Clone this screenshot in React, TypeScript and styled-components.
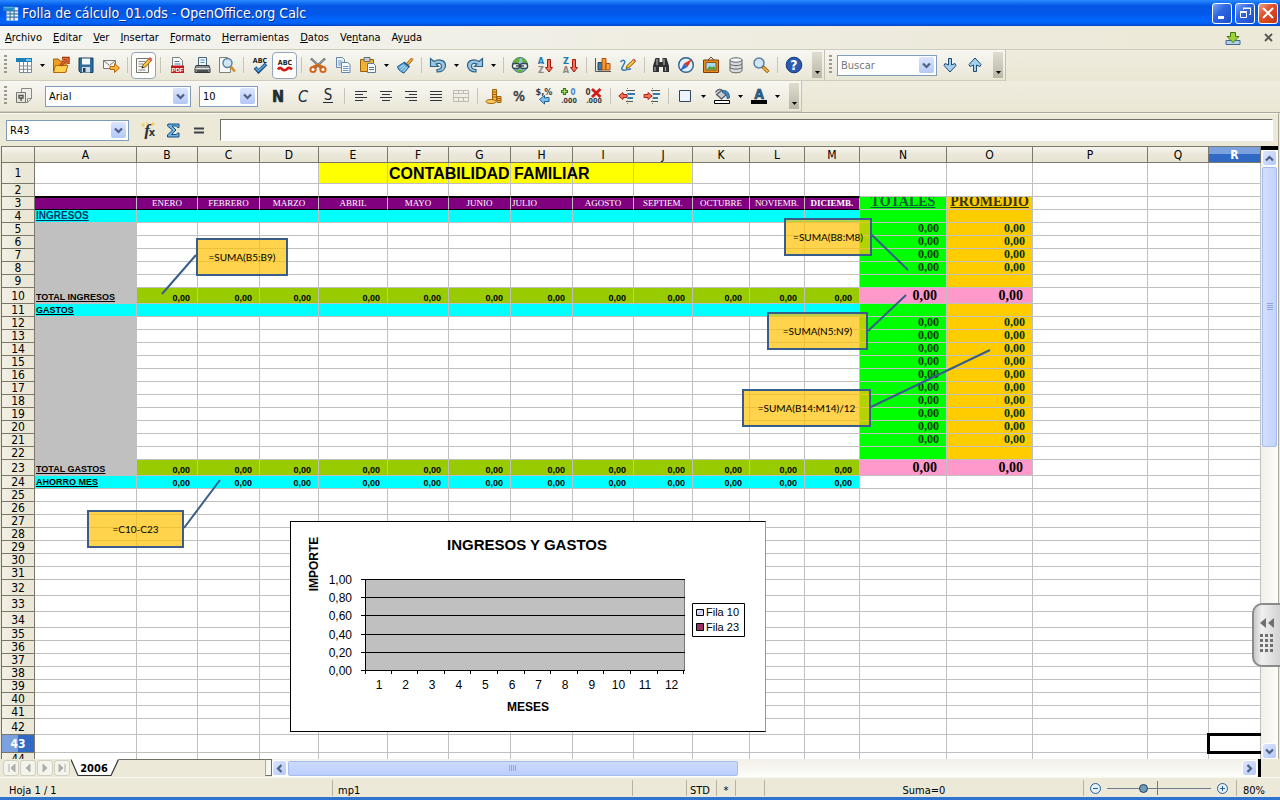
import React from "react";
import styled, { createGlobalStyle, css } from "styled-components";

const UI = `"DejaVu Sans Condensed", "Noto Sans", sans-serif`;
const SANS = `"Liberation Sans", Arial, sans-serif`;
const SERIF = `"Liberation Serif", "Times New Roman", serif`;

const Global = createGlobalStyle`
  * { box-sizing: border-box; }
  body { margin: 0; font-family: ${UI}; font-size: 11px; color: #000; overflow: hidden; }
  button, input, select { font: inherit; color: inherit; margin: 0; padding: 0; border: 0; background: none; outline: 0; }
  button { display: flex; align-items: center; justify-content: center; flex: none; }
  svg { display: block; flex: none; }
`;

const Window = styled.div`
  display: flex;
  flex-direction: column;
  height: 100vh;
  background: #ece9d8;
`;

/* ---------- title bar ---------- */
const TitleBar = styled.header`
  display: flex;
  align-items: center;
  height: 26px;
  flex: none;
  padding: 0 2px 0 3px;
  gap: 3px;
  background: linear-gradient(#2b8bff 0, #1371f4 3px, #0356e4 6px, #0358ea 14px, #0166ff 20px, #0162f6 23px, #0043c8 26px);
`;
const Title = styled.h1`
  flex: 1;
  margin: 0;
  font-size: 14px;
  line-height: 18px;
  font-weight: 400;
  color: #fff;
  text-shadow: 1px 1px 0 #0a2a80;
  white-space: nowrap;
`;
const CaptionButton = styled.button<{ $close?: boolean }>`
  width: 20px;
  height: 21px;
  border: 1px solid #fff;
  border-radius: 3px;
  background: ${(p) =>
    p.$close
      ? "linear-gradient(135deg, #f0a088, #e2502c 40%, #c5340f)"
      : "linear-gradient(135deg, #7fa6f5, #3068e2 40%, #1c4fc9)"};
`;

/* ---------- menu ---------- */
const MenuBar = styled.nav`
  display: flex;
  align-items: center;
  height: 24px;
  flex: none;
  padding: 0 0 0 5px;
  gap: 11px;
  background: linear-gradient(90deg, #f4f4f0, #edeadc 75%, #ece9d8);
  border-bottom: 1px solid #cfccbd;
`;
const MenuLink = styled.a`
  color: #000;
  line-height: 16px;
  text-decoration: none;
  white-space: nowrap;
`;
const Spacer = styled.div`
  flex: 1;
`;
const MenuButton = styled.button`
  width: 24px;
  height: 18px;
`;

/* ---------- toolbars ---------- */
const ToolRow = styled.div<{ $tall?: boolean }>`
  display: flex;
  height: ${(p) => (p.$tall ? 32 : 31)}px;
  flex: none;
  background: linear-gradient(#efecdf, #eae7d4);
  border-bottom: ${(p) => (p.$tall ? "1px solid #aca899" : "0")};
`;
const ToolBar = styled.div`
  display: flex;
  align-items: center;
  padding-right: 2px;
  background: linear-gradient(#f8f7f2, #efede2 60%, #e9e6d5);
  border-right: 1px solid #c4c1b0;
  border-bottom: 1px solid #cfccbd;
`;
const Grip = styled.i`
  width: 3px;
  height: 20px;
  margin: 0 4px;
  flex: none;
  background: repeating-linear-gradient(#9c9a8c 0 2px, transparent 2px 4px);
`;
const ToolButton = styled.button<{ $on?: boolean }>`
  width: 25px;
  height: 27px;
  border-radius: 4px;
  ${(p) =>
    p.$on &&
    css`
      background: #fdfdfc;
      border: 1px solid #93a5bd;
    `}
`;
const ArrowButton = styled.button`
  width: 12px;
  height: 25px;
`;
const Sep = styled.i`
  width: 1px;
  height: 16px;
  margin: 0 3px 0 4px;
  flex: none;
  background: #c6c4b6;
`;
const More = styled.button`
  width: 10px;
  height: 26px;
  margin-left: 6px;
  align-items: flex-end;
  padding-bottom: 4px;
  background: linear-gradient(#dfddd0, #b9b6a6);
`;
const Combo = styled.div<{ $w: number; $ml?: number }>`
  display: flex;
  align-items: center;
  width: ${(p) => p.$w}px;
  height: 21px;
  flex: none;
  margin-left: ${(p) => p.$ml || 0}px;
  padding: 0 2px 0 3px;
  border: 1px solid #7f9db9;
  background: #fff;
`;
const ComboSelect = styled.select`
  flex: 1;
  min-width: 0;
  height: 17px;
  appearance: none;
`;
const ComboInput = styled.input`
  flex: 1;
  min-width: 0;
  height: 17px;
  &::placeholder { color: #777; opacity: 1; }
`;
const Drop = styled.span`
  display: flex;
  align-items: center;
  justify-content: center;
  width: 15px;
  height: 16px;
  flex: none;
  border-radius: 2px;
  background: linear-gradient(#dbe5ff, #b3c8f8);
`;
const Gap = styled.i<{ $w: number }>`
  width: ${(p) => p.$w}px;
  flex: none;
`;

/* ---------- formula bar ---------- */
const FormulaBar = styled.div`
  display: flex;
  align-items: center;
  height: 33px;
  flex: none;
  padding: 0 5px 0 6px;
  margin-right: 1px;
  border-top: 1px solid #f8f7f0;
  border-right: 1px solid #aca899;
`;
const FormulaInput = styled.input`
  flex: 1;
  min-width: 0;
  height: 22px;
  margin-left: 9px;
  padding: 0 4px;
  background: #fff;
  border: 1px solid #fff;
  border-top: 1px solid #716f64;
  border-left: 1px solid #716f64;
`;

/* ---------- sheet ---------- */
const SheetRow = styled.div`
  display: flex;
  flex: 1;
  min-height: 0;
  margin: 0 1px;
  border-left: 1px solid #716f64;
  border-right: 1px solid #aca899;
`;
const Sheet = styled.main`
  position: relative;
  flex: 1;
  min-width: 0;
  overflow: hidden;
  background: #fff;
`;
const Grid = styled.table`
  width: 100%;
  table-layout: fixed;
  border-collapse: separate;
  border-spacing: 0;
`;
const Tr = styled.tr<{ $h: number }>`
  height: ${(p) => p.$h}px;
`;
const ColHead = styled.th<{ $on?: boolean }>`
  padding: 1px 0 0;
  font-size: 12px;
  line-height: 14px;
  font-weight: ${(p) => (p.$on ? 700 : 400)};
  color: ${(p) => (p.$on ? "#fff" : "#000")};
  background: ${(p) =>
    p.$on ? "linear-gradient(#7ba1de 50%, #316ac5 50%)" : "linear-gradient(#f6f5ee, #ebe8da 50%, #e6e3d2)"};
  border: solid #7a786a;
  border-width: 1px 1px 1px 0;
`;
const RowHead = styled.th<{ $on?: boolean }>`
  padding: 0;
  font-size: 12px;
  line-height: 12px;
  font-weight: ${(p) => (p.$on ? 700 : 400)};
  color: ${(p) => (p.$on ? "#fff" : "#000")};
  background: ${(p) =>
    p.$on ? "linear-gradient(90deg, #7ba1de 50%, #316ac5 50%)" : "linear-gradient(90deg, #f3f1e6, #ebe8d8 50%)"};
  border: solid #7a786a;
  border-width: 0 1px 1px 0;
`;
type Kind = "month" | "label" | "section" | "total" | "value" | "grand" | "title" | "head";
const kinds = {
  month: css`
    font: 9px/11px ${SERIF};
    color: #fff;
    text-align: center;
    border-top: 1px solid #000;
    border-bottom-color: #000;
  `,
  label: css`
    font: 700 9px/11px ${SANS};
    text-decoration: underline;
  `,
  section: css`
    font: 700 10px/12px ${SANS};
    text-decoration: underline;
    color: #036;
  `,
  total: css`
    font: 700 9px/10px ${SANS};
    text-align: right;
    padding-right: 7px;
  `,
  value: css`
    font: 700 12px/11px ${SERIF};
    text-align: right;
    padding-right: 7px;
    padding-bottom: 1px;
  `,
  grand: css`
    font: 700 14px/15px ${SERIF};
    text-align: right;
    padding-right: 9px;
  `,
  title: css`
    font: 700 16px/19px ${SANS};
  `,
  head: css`
    font: 700 14px/15px ${SERIF};
    text-decoration: underline;
  `,
};
const Td = styled.td<{ $bg?: string; $kind?: Kind; $left?: boolean; $bold?: boolean; $heavy?: boolean; $ink?: string }>`
  padding: 0 1px;
  font-size: 9px;
  line-height: 10px;
  vertical-align: bottom;
  white-space: nowrap;
  border: 0 solid #c0c0c0;
  border-width: 0 1px 1px 0;
  background: ${(p) => p.$bg || "transparent"};
  ${(p) => p.$kind && kinds[p.$kind]}
  ${(p) => p.$left && "text-align: left;"}
  ${(p) => p.$bold && "font-weight: 700;"}
  ${(p) => p.$heavy && "border-bottom-color: #000;"}
  ${(p) => p.$ink && `color: ${p.$ink};`}
`;
const ClipTop = styled.div`
  display: flex;
  align-items: flex-end;
  justify-content: center;
  height: 12px;
  overflow: hidden;
`;
const CursorCell = styled(Td)`
  position: relative;
  &::after {
    content: "";
    position: absolute;
    inset: -2px -4px -2px -2px;
    border: 3px solid #000;
  }
`;
const Leaders = styled.svg`
  position: absolute;
  left: 0;
  top: 0;
  width: 100%;
  height: 100%;
`;
const Callout = styled.div<{ $x: number; $y: number; $w: number }>`
  position: absolute;
  left: ${(p) => p.$x}px;
  top: ${(p) => p.$y}px;
  width: ${(p) => p.$w}px;
  height: 38px;
  display: flex;
  align-items: center;
  justify-content: center;
  border: 2px solid #385d8a;
  background: rgba(255, 192, 0, 0.7);
  font: 10px/14px Lato, ${UI};
  white-space: nowrap;
`;
const ChartFrame = styled.figure`
  position: absolute;
  left: 288px;
  top: 375px;
  margin: 0;
  background: #fff;
  border: 1px solid #000;
  border-right-color: #999;
`;

/* ---------- scroll bars ---------- */
const VScroll = styled.div`
  display: flex;
  flex-direction: column;
  align-items: center;
  width: 17px;
  flex: none;
  border-top: 4px solid #000;
  background: linear-gradient(90deg, #f1f0e8, #fdfdfa);
`;
const ScrollButton = styled.button`
  width: 15px;
  height: 16px;
  border: 1px solid #fff;
  border-radius: 3px;
  background: linear-gradient(135deg, #dde6ff, #b4c8f8);
`;
const VThumb = styled.div`
  display: flex;
  align-items: center;
  justify-content: center;
  width: 15px;
  height: 280px;
  margin-top: 1px;
  border: 1px solid #a5bcf0;
  border-radius: 2px;
  background: linear-gradient(90deg, #d3dffe, #c3d3fd);
`;
const BottomRow = styled.div`
  display: flex;
  height: 18px;
  flex: none;
  margin: 0 2px;
  padding-left: 1px;
`;
const NavButton = styled.button`
  width: 16px;
  height: 16px;
  margin: 1px 1px 0 0;
  border: 1px solid #d3d0c0;
  border-radius: 3px;
  background: #f4f3ec;
`;
const SheetTab = styled.button`
  position: relative;
  width: 48px;
  height: 18px;
  padding-right: 2px;
  font-size: 11px;
  line-height: 15px;
  font-weight: 700;
`;
const TabShape = styled.svg`
  position: absolute;
  left: 0;
  top: 0;
`;
const TabLabel = styled.span`
  position: relative;
`;
const TabFill = styled.div`
  width: 146px;
  border-top: 1px solid #716f64;
`;
const Splitter = styled.div`
  width: 7px;
  height: 17px;
  border: 1px solid #716f64;
  border-left-color: #aca899;
  background: #f6f5ee;
`;
const HScroll = styled.div`
  display: flex;
  flex: 1;
  align-items: center;
  padding: 0 1px 0 0;
  background: linear-gradient(#f1f0e8, #fdfdfa);
`;
const HThumb = styled.div`
  display: flex;
  align-items: center;
  justify-content: center;
  width: 450px;
  height: 15px;
  margin: 0 auto 0 1px;
  border: 1px solid #a5bcf0;
  border-radius: 2px;
  background: linear-gradient(#cbdafe, #bccffc);
`;
const EndMark = styled.i`
  width: 3px;
  background: #000;
`;
const Corner = styled.i`
  width: 17px;
`;

/* ---------- status bar ---------- */
const StatusBar = styled.footer`
  display: grid;
  grid-template-columns: 331px 300px 54px 30px 19px 29px 1fr 153px 44px;
  height: 23px;
  flex: none;
  padding: 2px 0 0 1px;
  border-top: 1px solid #f8f7f0;
  border-bottom: 3px solid #2f75cf;
  line-height: 21px;
  text-align: center;
`;
const Cell = styled.div<{ $pad?: number }>`
  height: 16px;
  border-left: 1px solid #b5b2a2;
  text-align: ${(p) => (p.$pad ? "left" : "center")};
  padding-left: ${(p) => p.$pad || 0}px;
  &:first-child { border-left: 0; }
`;
const ZoomCell = styled(Cell)`
  display: flex;
  align-items: center;
  gap: 5px;
`;
const ZoomRange = styled.input`
  width: 104px;
  height: 14px;
  appearance: none;
  background: linear-gradient(90deg, transparent 50px, #6c7a8d 50px 51px, transparent 51px);
  &::-webkit-slider-runnable-track {
    height: 1px;
    background: #6c7a8d;
  }
  &::-webkit-slider-thumb {
    appearance: none;
    width: 9px;
    height: 9px;
    margin-top: -4px;
    border: 1px solid #1f3f60;
    border-radius: 50%;
    background: #6f9cb4;
  }
`;
const SideHandle = styled.button`
  position: absolute;
  right: 0;
  top: 603px;
  width: 28px;
  height: 64px;
  border: 2px solid #8b8b8b;
  border-right: 0;
  border-radius: 10px 0 0 10px;
  background: linear-gradient(90deg, #c9c9c9, #f0f0f0 30%, #d2d2d2);
`;

/* ---------- icons ---------- */
const Caret = () => (
  <svg width="5" height="3" viewBox="0 0 5 3">
    <path d="M0 0h5L2.500 3z" fill="#000" />
  </svg>
);
const Chevron = ({ turn = 0 }: { turn?: number }) => (
  <svg width="9" height="9" viewBox="0 0 9 9">
    <path d="M1 2.500 4.500 6 8 2.500" transform={`rotate(${turn} 4.500 4.500)`} fill="none" stroke="#4d6185" strokeWidth="2.200" />
  </svg>
);

const art: Record<string, React.ReactNode> = {
  app: (
    <>
      <path d="M4 2h13v15H4z" fill="#e8f1f8" />
      <path d="M4 6h13M4 9.500h13M4 13h13M8 2v15M12.500 2v15" stroke="#3c77a8" strokeWidth="1.300" />
      <path d="M0 1h12v5H0z" fill="#1d86c8" />
      <path d="M1 2h10v1H1z" fill="#67bdf0" />
    </>
  ),
  sheet: (
    <>
      <path d="M4 4h12v12H4z" fill="#fff" />
      <path d="M4.500 6v10.500h12V6M4.500 10h12M4.500 13.300h12M8.500 6v10.500M12.500 6v10.500" fill="none" stroke="#7d8c9c" />
      <path d="M1 2h16v4H1z" fill="#1b7fb8" />
      <path d="M11 3h5v2h-5z" fill="#79c4ea" />
    </>
  ),
  open: (
    <>
      <path d="M1.500 5.500V3h5l1.500 2h6v11H1.500z" fill="#f0a020" stroke="#a05a08" />
      <path d="M3.500 9.500H16l-2.500 7H1.500z" fill="#ffd052" stroke="#b06c0c" />
      <path d="M8.500 9.500 14 4M10 2.200h6.200V8" fill="none" stroke="#a53309" strokeWidth="3" />
      <path d="M8.800 9.200 14 4M10.500 2.500h5.400v5.200" fill="none" stroke="#f0743c" strokeWidth="1.200" />
    </>
  ),
  save: (
    <>
      <path d="M2 2h14v14.500H3.500L2 15z" fill="#2f6d9c" stroke="#173d5c" />
      <path d="M5 2.500h8v6H5z" fill="#f4f9fc" />
      <path d="M5 11h8v5.500H5z" fill="#cfdce6" />
      <path d="M6 12h2.500v4H6z" fill="#173d5c" />
    </>
  ),
  mail: (
    <>
      <path d="M1.500 4.500h12v8h-12z" fill="#f7f7f5" stroke="#77776f" />
      <path d="m1.500 4.500 6 5 6-5" fill="none" stroke="#77776f" />
      <path d="M8 10.500h4.500v-3L17.500 12l-5 4.500v-3H8z" fill="#fbb43a" stroke="#b56a0c" />
    </>
  ),
  edit: (
    <>
      <path d="M1.500 2.500h12v14h-12z" fill="#f8f8f6" stroke="#77776f" />
      <path d="M3.500 5.500h7M3.500 8h5M3.500 10.500h4M3.500 14h7" stroke="#8a8a84" />
      <path d="m7 12 1-3 6-6.500 2.500 2L10.500 11z" fill="#f6c544" stroke="#8b5a12" />
      <path d="m13 3 2-2 2.500 2-2 2z" fill="#d65c62" />
      <path d="m6.500 12.500 1-2.500 1.500 1.500z" fill="#333" />
    </>
  ),
  pdf: (
    <>
      <path d="M4.500 1.500h7l3 3V11h-10z" fill="#fafafa" stroke="#77807f" />
      <path d="M6.500 5.500h5M6.500 8h6" stroke="#4a7aa8" />
      <path d="M3 9.500h13V17H3z" fill="#c8161d" />
      <text x="9.500" y="15.500" fontSize="6" fontWeight="700" fill="#fff" textAnchor="middle" fontFamily={SANS}>PDF</text>
    </>
  ),
  print: (
    <>
      <path d="M5.500 1.500h8v8h-8z" fill="#eef5fb" stroke="#47647c" />
      <path d="M7.500 4h4M7.500 6.500h4" stroke="#5a87ad" />
      <path d="M3 9.500h13l1 3v4H2v-4z" fill="#8b8d8e" stroke="#393a3b" />
      <path d="M2.500 12.500h14" stroke="#e3e3e3" />
      <path d="M4 15h11" stroke="#393a3b" strokeWidth="1.500" />
    </>
  ),
  preview: (
    <>
      <path d="M1.500 1.500h8l3 3v12h-11z" fill="#f7f7f5" stroke="#80807a" />
      <circle cx="9.500" cy="7" r="4.500" fill="#cfe6f6" stroke="#5a7f9e" strokeWidth="1.400" />
      <path d="m12.800 10.500 4 5" stroke="#d28a28" strokeWidth="2.600" />
    </>
  ),
  spell: (
    <>
      <text x="9" y="6.500" fontSize="7" fontWeight="700" fill="#222" textAnchor="middle" fontFamily={UI}>ABC</text>
      <path d="m4 11.500 3.500 4L15 8" fill="none" stroke="#174a7c" strokeWidth="3.600" />
      <path d="m4.500 11.800 3 3L14.500 8.500" fill="none" stroke="#5aa7e0" strokeWidth="1.600" />
    </>
  ),
  autospell: (
    <>
      <text x="9" y="9" fontSize="7" fontWeight="700" fill="#222" textAnchor="middle" fontFamily={UI}>ABC</text>
      <path d="M2 13.500c2-3 3.500-1 4.500 0s3 1 4.500-.5 3-1.500 5 .5" fill="none" stroke="#d31d14" strokeWidth="2.600" />
    </>
  ),
  cut: (
    <>
      <path d="M2 2.500 12 12M16 2.500 6 12" stroke="#59636b" strokeWidth="2.400" />
      <path d="M2.500 3 11 11M15.500 3 7 11" stroke="#cfd6db" strokeWidth=".8" />
      <path d="m9 9-5 2M9 9l5 2" stroke="#d2661a" strokeWidth="2.600" />
      <circle cx="4" cy="13.500" r="2.600" fill="#fff" stroke="#d2661a" strokeWidth="2" />
      <circle cx="14" cy="13.500" r="2.600" fill="#fff" stroke="#d2661a" strokeWidth="2" />
    </>
  ),
  copy: (
    <>
      <path d="M2.500 1.500h6l2 2v8h-8z" fill="#eef4fa" stroke="#6687a6" />
      <path d="M4 5h4.500M4 7h4.500M4 9h4.500" stroke="#6d96bd" />
      <path d="M7.500 6.500h6l2.500 2v8H7.500z" fill="#f7fafd" stroke="#6687a6" />
      <path d="M9 10.500h5.500M9 12.500h5.500M9 14.500h5.500" stroke="#6d96bd" />
    </>
  ),
  paste: (
    <>
      <path d="M1.500 3.500h13v12h-13z" fill="#f2b135" stroke="#9a5d0b" />
      <path d="M5 1.500h6v4H5z" fill="#c9cbcc" stroke="#6c6d6e" />
      <path d="M8.500 7.500h6l2 2v7h-8z" fill="#f5f9fc" stroke="#5c7a96" />
      <path d="M10 11.500h5M10 13.500h5" stroke="#5c7a96" />
    </>
  ),
  brush: (
    <>
      <path d="m10 8 5.500-6 1.500 1.500L12 9.500z" fill="#f2b135" stroke="#a3630b" />
      <path d="M1.500 10.500 8 6.500l5 4.500-5 6-2.500-1L4 14.500l-1.500-1z" fill="#5fa8d8" stroke="#1e5c8c" />
      <path d="m3.500 12 4.500-3M5 14l4.500-4M7.500 15.500l3.500-4.500" stroke="#c9e4f6" />
      <path d="m8 6 5.500 5" stroke="#1e5c8c" strokeWidth="1.600" />
    </>
  ),
  undo: (
    <path d="M1.500 2.500v8h8L7 8c3-1.500 5.500-.5 5.500 2 0 2-1.500 3.500-4.500 3.500V16c5 0 8.500-2.500 8.500-6.500C16.500 4 10 2.500 5 5.500z" fill="#9cc5e2" stroke="#2d6288" strokeWidth="1.200" />
  ),
  redo: (
    <path d="M16.500 2.500v8h-8L11 8c-3-1.500-5.500-.5-5.500 2 0 2 1.500 3.500 4.500 3.500V16c-5 0-8.500-2.500-8.500-6.500C1.500 4 8 2.500 13 5.500z" fill="#9cc5e2" stroke="#2d6288" strokeWidth="1.200" />
  ),
  globe: (
    <>
      <circle cx="9" cy="9" r="7.500" fill="#8cc6ea" stroke="#44708c" />
      <path d="M2.500 5.500C5 1 8 1.500 9 2L8 6 4 8zM10.500 2c4 0 6 4 5 6L12 7zM4 13.500l9 .5-4 3z" fill="#62b32c" />
      <rect x="1.500" y="7.500" width="7" height="5" rx="2" fill="#e9eef0" stroke="#37464f" strokeWidth="1.400" />
      <rect x="9.500" y="7.500" width="7" height="5" rx="2" fill="#e9eef0" stroke="#37464f" strokeWidth="1.400" />
      <path d="M5 10h8" stroke="#37464f" strokeWidth="1.400" />
    </>
  ),
  sortAZ: (
    <>
      <text x="5" y="8" fontSize="9" fontWeight="700" fill="#1d78b8" textAnchor="middle" fontFamily={UI}>A</text>
      <text x="5" y="17" fontSize="9" fontWeight="700" fill="#888" textAnchor="middle" fontFamily={UI}>Z</text>
      <path d="M11.500 3.500h3v8h2L13 16l-3.500-4.500h2z" fill="#f2745c" stroke="#a3160d" />
    </>
  ),
  sortZA: (
    <>
      <text x="5" y="8" fontSize="9" fontWeight="700" fill="#1d78b8" textAnchor="middle" fontFamily={UI}>Z</text>
      <text x="5" y="17" fontSize="9" fontWeight="700" fill="#888" textAnchor="middle" fontFamily={UI}>A</text>
      <path d="M11.500 3.500h3v8h2L13 16l-3.500-4.500h2z" fill="#f2745c" stroke="#a3160d" />
    </>
  ),
  chart: (
    <>
      <path d="M1.500 2v13.500H17" fill="none" stroke="#555" />
      <path d="M4 6.500h4v7.500H4z" fill="#3f78a6" stroke="#1f4464" />
      <path d="M8 2.500h4V14H8z" fill="#f09a2c" stroke="#b3500c" />
      <path d="M12 7.500h4V14h-4z" fill="#f3a24a" stroke="#b3500c" />
    </>
  ),
  draw: (
    <>
      <path d="M1.500 6c3-3 5.500-1.500 3.500 2s-3.500 5-1 6 5-1.500 8-1" fill="none" stroke="#2f79b8" strokeWidth="1.500" />
      <path d="m7 12.500 1-3 6.500-6 2 2-6.500 6z" fill="#f6c544" stroke="#8b5a12" />
      <path d="m13.500 3.500 1.500-1 2 2-1 1.500z" fill="#d65c62" />
    </>
  ),
  find: (
    <>
      <path d="M3.500 2h4v4h3V2h4l2.500 8v6h-6v-5h-4v5H1v-6z" fill="#2f3133" />
      <path d="M5 3v6M12 3v6M3 11v4M13.500 11v4" stroke="#a9adb0" strokeWidth="1.200" />
    </>
  ),
  navigator: (
    <>
      <circle cx="9" cy="9" r="7.300" fill="#dff0fc" stroke="#2e618f" strokeWidth="1.400" />
      <path d="M15 3 10.500 11 7 7.500z" fill="#e0341c" />
      <path d="m3 15 4-7.500 3.500 3.500z" fill="#3567c0" />
    </>
  ),
  gallery: (
    <>
      <path d="m6 4 3-3 3 3" fill="none" stroke="#6b4a1d" />
      <path d="M1.500 4h15v12.500h-15z" fill="#e48a1e" stroke="#7c3f06" />
      <path d="M4 6.500h10V14H4z" fill="#a8d8f4" stroke="#7c3f06" strokeWidth=".8" />
      <path d="M4.500 13.500 8 10l2 1.500 2-1.500 1.800 3.500z" fill="#4f9d35" />
    </>
  ),
  database: (
    <>
      <path d="M3 4v10.500c0 3 12 3 12 0V4z" fill="#d8dadb" stroke="#63676a" />
      <ellipse cx="9" cy="4" rx="6" ry="2.200" fill="#f4f5f5" stroke="#63676a" />
      <path d="M3 7.700c0 2.500 12 2.500 12 0M3 11.200c0 2.500 12 2.500 12 0" fill="none" stroke="#63676a" />
    </>
  ),
  zoom: (
    <>
      <circle cx="7" cy="7" r="5" fill="#cfe6f6" stroke="#5a7f9e" strokeWidth="1.500" />
      <path d="m10.800 10.800 5.500 5.200" stroke="#9b5d12" strokeWidth="3.600" />
      <path d="m11.300 11.300 4.500 4.200" stroke="#f2b64a" strokeWidth="1.800" />
    </>
  ),
  help: (
    <>
      <circle cx="9" cy="9" r="7.800" fill="#2a5bb0" stroke="#17397c" />
      <text x="9" y="14" fontSize="14" fontWeight="700" fill="#fff" textAnchor="middle" fontFamily={UI}>?</text>
    </>
  ),
  down: <path d="M7.500 2.500h3V9l3.500-1.500 1 2L9 16 3 9.500l1-2L7.500 9z" fill="#a6d0ee" stroke="#1d4a70" />,
  up: <path d="M7.500 15.500h3V9l3.500 1.500 1-2L9 2 3 8.500l1 2L7.500 9z" fill="#a6d0ee" stroke="#1d4a70" />,
  styles: (
    <>
      <path d="M6.500 1.500h10v10l-4 4h-6z" fill="#efeee8" stroke="#8a8a80" />
      <path d="M12.500 15.500v-4h4" fill="none" stroke="#8a8a80" />
      <path d="M1.500 5.500h9v10h-9z" fill="#e6e5dd" stroke="#77776f" />
      <path d="M4 8.500h4v2.500H4zM6 11v3" fill="none" stroke="#555" strokeWidth="1.400" />
    </>
  ),
  bold: <text x="9" y="15" fontSize="16" fontWeight="700" fill="#222b33" textAnchor="middle" fontFamily={UI} stroke="#222b33" strokeWidth=".6">N</text>,
  italic: <text x="9" y="15" fontSize="16" fontStyle="italic" fill="#222b33" textAnchor="middle" fontFamily={UI}>C</text>,
  underline: (
    <>
      <text x="9" y="13" fontSize="15" fill="#222b33" textAnchor="middle" fontFamily={UI}>S</text>
      <path d="M4 15.500h10" stroke="#222b33" />
    </>
  ),
  left: <path d="M3 4.500h12M3 7.500h8M3 10.500h12M3 13.500h8" stroke="#30363b" />,
  center: <path d="M3 4.500h12M5 7.500h8M3 10.500h12M5 13.500h8" stroke="#30363b" />,
  right: <path d="M3 4.500h12M7 7.500h8M3 10.500h12M7 13.500h8" stroke="#30363b" />,
  justify: <path d="M3 4.500h12M3 7.500h12M3 10.500h12M3 13.500h12" stroke="#30363b" />,
  merge: <path d="M1.500 3.500h15v11h-15zM1.500 6.500h15M1.500 10.500h15M6.500 3.500v3M11.500 3.500v3M6.500 10.500v4M11.500 10.500v4" fill="none" stroke="#bdbbb0" />,
  currency: (
    <>
      <path d="M7.500 2.500h4v11h-4z" fill="#f6b83c" stroke="#a0610c" />
      <path d="M12 9.500h4v6h-4z" fill="#f6b83c" stroke="#a0610c" />
      <path d="M7.500 5h4M7.500 7.500h4M7.500 10h4M12 11.500h4M12 13.500h4" stroke="#a0610c" />
      <ellipse cx="6" cy="14.500" rx="5" ry="2" fill="#ffd160" stroke="#a0610c" />
    </>
  ),
  percent: <text x="9" y="14" fontSize="14" fill="#333b42" stroke="#333b42" strokeWidth=".5" textAnchor="middle" fontFamily={UI}>%</text>,
  standard: (
    <>
      <text x="9" y="8" fontSize="9" fontWeight="700" fill="#333b42" textAnchor="middle" fontFamily={UI}>$,%</text>
      <path d="M14 10.500v4H9.500V17L4.500 12.500l5-4v2.500h2v-.5z" fill="#7ec0ee" stroke="#1c5d94" />
    </>
  ),
  addDecimal: (
    <>
      <path d="M4.500 1v7M1 4.500h7" stroke="#2b7a14" strokeWidth="3.200" />
      <path d="M4.500 2v5M2 4.500h5" stroke="#a5e06a" strokeWidth="1.200" />
      <text x="13" y="8" fontSize="8" fontWeight="700" fill="#4a7fd0" textAnchor="middle" fontFamily={UI}>0</text>
      <text x="9" y="16" fontSize="7" fontWeight="700" fill="#333b42" textAnchor="middle" fontFamily={UI}>.000</text>
    </>
  ),
  delDecimal: (
    <>
      <text x="3" y="8" fontSize="8" fontWeight="700" fill="#333b42" textAnchor="middle" fontFamily={UI}>0</text>
      <text x="9" y="16" fontSize="7" fontWeight="700" fill="#333b42" textAnchor="middle" fontFamily={UI}>.000</text>
      <path d="m7 2 8.500 8M15.500 2 7 10" stroke="#d31a16" strokeWidth="2.800" />
    </>
  ),
  outdent: (
    <>
      <path d="M8 3.500h9M8 14.500h7" stroke="#555" />
      <path d="M10 7h7M10 11h5" stroke="#2d7fb8" strokeWidth="1.800" />
      <path d="M9.500 1v16" stroke="#888" strokeDasharray="1 1.500" />
      <path d="M.8 9 5 5.500v2h4v3H5v2z" fill="#f07a60" stroke="#b01c10" />
    </>
  ),
  indent: (
    <>
      <path d="M8 3.500h9M8 14.500h7" stroke="#555" />
      <path d="M10 7h7M10 11h5" stroke="#2d7fb8" strokeWidth="1.800" />
      <path d="M9.500 1v16" stroke="#888" strokeDasharray="1 1.500" />
      <path d="M9 9 5 5.500v2H1v3h4v2z" fill="#f07a60" stroke="#b01c10" />
    </>
  ),
  borders: <path d="M3.500 3.500h11v11h-11z" fill="#eef4fb" stroke="#33475c" />,
  fill: (
    <>
      <path d="M2.500 5.500c2-4 6-4 7-1.500l3.500 4L8.500 12 3.500 7.500l5-4" fill="#c6ccd0" stroke="#4c565d" strokeWidth="1.200" />
      <path d="M9.500 3.500c4-.5 7 1.500 7 7.500l-2.500.5c0-3-1-5-4.500-6z" fill="#3e86bf" stroke="#1f5480" strokeWidth=".8" />
      <path d="M1.500 13.500h15v3h-15z" fill="#fff" stroke="#000" />
    </>
  ),
  fontColor: (
    <>
      <text x="9" y="12" fontSize="14" fontWeight="700" fill="#2c618e" textAnchor="middle" fontFamily={UI} stroke="#173e60" strokeWidth=".5">A</text>
      <path d="M1 13h16v4H1z" fill="#000" />
    </>
  ),
  fx: (
    <>
      <path d="M1 4h4M3 2v4M11 3h4M13 1v4M7 1v2" stroke="#f0cf4a" strokeWidth="1.200" />
      <text x="7" y="15" fontSize="17" fontStyle="italic" fontWeight="700" fill="#2c3338" textAnchor="middle" fontFamily={SERIF}>f</text>
      <text x="12" y="15" fontSize="11" fontWeight="700" fill="#2c3338" textAnchor="middle" fontFamily={UI}>x</text>
    </>
  ),
  sigma: <path d="M3 3h11v3.500h-1.500L11.500 5H7l4 4-4.500 4.500h5l1-1.500H14v4H2.500v-2l5-5-5-4z" fill="#6fb5e6" stroke="#154d7e" />,
  equals: <path d="M4 7.500h10M4 11.500h10" stroke="#3b4348" strokeWidth="1.800" />,
  download: (
    <>
      <path d="M2 11.500h14v4H2z" fill="#b7cfe4" stroke="#3f6b8f" />
      <path d="M6.500 3.500h5v4H15l-6 6-6-6h3.500z" fill="#9bd43a" stroke="#427a10" />
    </>
  ),
};
const Icon = ({ name }: { name: string }) => (
  <svg width="18" height="18" viewBox="0 0 18 18" aria-hidden="true">
    {art[name]}
  </svg>
);

/* Items: "|" is a separator, "v" a drop-down arrow, "*" marks a pressed button. */
const Tools = ({ items }: { items: string }) => (
  <>
    {items.split(" ").map((t, i) => {
      if (t === "|") return <Sep key={i} />;
      if (t === "v") return <ArrowButton key={i} aria-label="Más opciones"><Caret /></ArrowButton>;
      const name = t.replace("*", "");
      return (
        <ToolButton key={i} $on={t.endsWith("*")} aria-label={name}>
          <Icon name={name} />
        </ToolButton>
      );
    })}
  </>
);

/* ---------- sheet data ---------- */
const columns: [string, number | null][] = [
  ["A", 102], ["B", 61], ["C", 62], ["D", 59], ["E", 69], ["F", 61], ["G", 62], ["H", 62], ["I", 61],
  ["J", 59], ["K", 57], ["L", 55], ["M", 55], ["N", 87], ["O", 86], ["P", 115], ["Q", 61], ["R", null],
];
const tall: Record<number, number> = { 1: 21, 10: 16, 23: 16, 32: 16, 33: 16, 34: 16, 42: 16, 43: 18 };
const months: Record<string, string> = {
  B: "ENERO", C: "FEBRERO", D: "MARZO", E: "ABRIL", F: "MAYO", G: "JUNIO", H: "JULIO",
  I: "AGOSTO", J: "SEPTIEM.", K: "OCTUBRE", L: "NOVIEMB.", M: "DICIEMB.",
};
const labels: Record<number, string> = { 4: "INGRESOS", 10: "TOTAL INGRESOS", 11: "GASTOS", 23: "TOTAL GASTOS", 24: "AHORRO MES" };

function cell(col: string, row: number) {
  const inMonths = col >= "B" && col <= "M";
  const summary = col === "N" || col === "O";
  const grand = row === 10 || row === 23;

  if (row === 1) {
    if (col >= "E" && col <= "J")
      return <Td key={col} $bg="#ff0" $kind="title">{col === "F" ? "CONTABILIDAD FAMILIAR" : null}</Td>;
    return <Td key={col} />;
  }
  if (row === 2) return <Td key={col} $heavy={col <= "M"} />;
  if (row === 43 && col === "R") return <CursorCell key={col} />;
  if (row > 24 || col > "O") return <Td key={col} />;

  if (summary) {
    if (row === 24) return <Td key={col} />;
    const bg = grand ? "#f9c" : col === "N" ? "#0f0" : "#fc0";
    if (row === 3)
      return (
        <Td key={col} $bg={bg} $kind="head" $ink={col === "N" ? "#005f3c" : "#333300"}>
          <ClipTop>{col === "N" ? "TOTALES" : "PROMEDIO"}</ClipTop>
        </Td>
      );
    if (grand) return <Td key={col} $bg={bg} $kind="grand">0,00</Td>;
    const filled = (row >= 5 && row <= 8) || (row >= 12 && row <= 21);
    return <Td key={col} $bg={bg} $kind="value" $ink="#030">{filled ? "0,00" : null}</Td>;
  }
  if (row === 3)
    return <Td key={col} $bg="#800080" $kind="month" $left={col === "H"} $bold={col === "M"}>{months[col]}</Td>;
  if (col === "A") {
    const bg = row === 4 || row === 11 || row === 24 ? "#0ff" : "#c0c0c0";
    return <Td key={col} $bg={bg} $kind={row === 4 ? "section" : "label"}>{labels[row]}</Td>;
  }
  if (inMonths) {
    if (row === 4 || row === 11) return <Td key={col} $bg="#0ff" />;
    if (grand) return <Td key={col} $bg="#9c0" $kind="total">0,00</Td>;
    if (row === 24) return <Td key={col} $bg="#0ff" $kind="total">0,00</Td>;
  }
  return <Td key={col} />;
}

const Chart = () => (
  <svg width="474" height="209" viewBox="291 522 474 209" fontFamily={SANS} role="img" aria-label="Ingresos y gastos">
    <text x="527" y="550" fontSize="15" fontWeight="700" textAnchor="middle">INGRESOS Y GASTOS</text>
    <text transform="translate(318 564) rotate(-90)" fontSize="12" fontWeight="700" textAnchor="middle">IMPORTE</text>
    <text x="528" y="711" fontSize="12" fontWeight="700" textAnchor="middle">MESES</text>
    <path d="M365 579h320v92H365z" fill="#c0c0c0" />
    <path d="M684.500 579v91" stroke="#777" />
    {[579, 597, 615, 634, 652, 670].map((y, i) => (
      <g key={y}>
        <path d={`M361 ${y + 0.5}h324`} stroke="#000" />
        <text x="352" y={y + 5} fontSize="12" textAnchor="end">{["1,00", "0,80", "0,60", "0,40", "0,20", "0,00"][i]}</text>
      </g>
    ))}
    <path d="M365.500 579v95" stroke="#000" />
    {Array.from({ length: 12 }, (_, i) => (
      <g key={i}>
        <path d={`M${Math.round(365 + (i + 1) * 26.6) - 0.5} 670v4`} stroke="#000" />
        <text x={379 + i * 26.6} y="689" fontSize="12" textAnchor="middle">{i + 1}</text>
      </g>
    ))}
    <path d="M692.500 603.500h52v33h-52z" fill="#fff" stroke="#000" />
    <path d="M696.500 609.500h7v6h-7z" fill="#dfe2ff" stroke="#000" />
    <path d="M697 615l6-5" stroke="#9999ff" />
    <path d="M696.500 623.500h7v7h-7z" fill="#936" stroke="#000" />
    <text x="706" y="616" fontSize="11">Fila 10</text>
    <text x="706" y="631" fontSize="11">Fila 23</text>
  </svg>
);

const menus = [
  ["", "A", "rchivo"], ["", "E", "ditar"], ["", "V", "er"], ["", "I", "nsertar"], ["", "F", "ormato"],
  ["", "H", "erramientas"], ["", "D", "atos"], ["Ve", "n", "tana"], ["Ay", "u", "da"],
];

export default function App() {
  return (
    <Window>
      <Global />
      <TitleBar>
        <svg width="16" height="17" viewBox="0 0 18 18">{art.app}</svg>
        <Title>Folla de cálculo_01.ods - OpenOffice.org Calc</Title>
        <CaptionButton aria-label="Minimizar">
          <svg width="14" height="14"><path d="M3 10h6v3H3z" fill="#fff" /></svg>
        </CaptionButton>
        <CaptionButton aria-label="Restaurar">
          <svg width="14" height="14" fill="none" stroke="#fff">
            <path d="M5.500 4V2.500h7v6H11M5 2h8" />
            <path d="M2.500 6.500h6v5h-6zM2 5.500h7" />
          </svg>
        </CaptionButton>
        <CaptionButton $close aria-label="Cerrar">
          <svg width="14" height="14"><path d="m2 2 10 10M12 2 2 12" stroke="#fff" strokeWidth="2" /></svg>
        </CaptionButton>
      </TitleBar>

      <MenuBar>
        {menus.map(([a, k, b]) => (
          <MenuLink key={a + k + b} href="#">{a}<u>{k}</u>{b}</MenuLink>
        ))}
        <Spacer />
        <MenuButton aria-label="Actualizar"><Icon name="download" /></MenuButton>
        <MenuButton aria-label="Cerrar documento">
          <svg width="9" height="9"><path d="m1 1 7 7M8 1 1 8" stroke="#555" strokeWidth="1.800" /></svg>
        </MenuButton>
      </MenuBar>

      <ToolRow>
        <ToolBar>
          <Grip />
          <Tools items="sheet v open save mail | edit* | pdf print preview | spell autospell* | cut copy paste v brush | undo v redo v | globe sortAZ sortZA | chart draw | find navigator gallery database zoom | help" />
          <More aria-label="Más"><Caret /></More>
        </ToolBar>
        <ToolBar>
          <Grip />
          <Combo $w={100} $ml={1}>
            <ComboInput placeholder="Buscar" aria-label="Buscar" />
            <Drop><Chevron /></Drop>
          </Combo>
          <Tools items="down up" />
          <More aria-label="Más"><Caret /></More>
        </ToolBar>
      </ToolRow>

      <ToolRow $tall>
        <ToolBar>
          <Grip />
          <Tools items="styles" />
          <Combo $w={146} $ml={9}>
            <ComboSelect aria-label="Fuente"><option>Arial</option></ComboSelect>
            <Drop><Chevron /></Drop>
          </Combo>
          <Combo $w={59} $ml={8}>
            <ComboSelect aria-label="Tamaño"><option>10</option></ComboSelect>
            <Drop><Chevron /></Drop>
          </Combo>
          <Gap $w={7} />
          <Tools items="bold italic underline | left center right justify merge | currency percent standard addDecimal delDecimal | outdent indent | borders v fill v fontColor v" />
          <More aria-label="Más"><Caret /></More>
        </ToolBar>
      </ToolRow>

      <FormulaBar>
        <Combo $w={123}>
          <ComboSelect aria-label="Cuadro de nombre"><option>R43</option></ComboSelect>
          <Drop><Chevron /></Drop>
        </Combo>
        <Gap $w={7} />
        <Tools items="fx sigma equals" />
        <FormulaInput aria-label="Línea de entrada" />
      </FormulaBar>

      <SheetRow>
        <Sheet>
          <Grid>
            <colgroup>
              <col style={{ width: 33 }} />
              {columns.map(([c, w]) => <col key={c} style={w ? { width: w } : undefined} />)}
            </colgroup>
            <thead>
              <Tr $h={17}>
                <ColHead />
                {columns.map(([c]) => <ColHead key={c} scope="col" $on={c === "R"}>{c}</ColHead>)}
              </Tr>
            </thead>
            <tbody>
              {Array.from({ length: 44 }, (_, i) => i + 1).map((r) => (
                <Tr key={r} $h={tall[r] || 13}>
                  <RowHead scope="row" $on={r === 43}>{r}</RowHead>
                  {columns.map(([c]) => cell(c, r))}
                </Tr>
              ))}
            </tbody>
          </Grid>

          <ChartFrame><Chart /></ChartFrame>

          <Callout $x={194} $y={92} $w={92}>=SUMA(B5:B9)</Callout>
          <Callout $x={782} $y={72} $w={88}>=SUMA(B8:M8)</Callout>
          <Callout $x={765} $y={166} $w={101}>=SUMA(N5:N9)</Callout>
          <Callout $x={740} $y={243} $w={129}>=SUMA(B14:M14)/12</Callout>
          <Callout $x={85} $y={364} $w={97}>=C10-C23</Callout>
          <Leaders fill="none" stroke="#385d8a" strokeWidth="2">
            <path d="M194 109 160 148M870 89l36 35M866 185l38-36M869 261l119-57M182 382l36-48" />
          </Leaders>
        </Sheet>
        <VScroll>
          <ScrollButton aria-label="Arriba"><Chevron turn={180} /></ScrollButton>
          <VThumb>
            <svg width="6" height="8"><path d="M0 .5h6M0 2.500h6M0 4.500h6M0 6.500h6" stroke="#8ba6e6" /></svg>
          </VThumb>
          <Spacer />
          <ScrollButton aria-label="Abajo"><Chevron /></ScrollButton>
        </VScroll>
      </SheetRow>

      <BottomRow>
        {["M3 1v8M9 1v8L5 5z", "M7 1v8L3 5z", "M3 1v8l4-4z", "M2 1v8l4-4zM8 1v8"].map((d, i) => (
          <NavButton key={d} aria-label={["Primera hoja", "Hoja anterior", "Hoja siguiente", "Última hoja"][i]}>
            <svg width="10" height="10"><path d={d} fill="#aeb0aa" stroke="#aeb0aa" /></svg>
          </NavButton>
        ))}
        <SheetTab>
          <TabShape width="48" height="18">
            <path d="M0 0 7 16h33L47 0z" fill="#fff" />
            <path d="M0 .5 7 16.500h33L47.500.5" fill="none" stroke="#333" strokeWidth="1.200" />
          </TabShape>
          <TabLabel>2006</TabLabel>
        </SheetTab>
        <TabFill />
        <Splitter />
        <HScroll>
          <ScrollButton aria-label="Izquierda"><Chevron turn={90} /></ScrollButton>
          <HThumb>
            <svg width="8" height="6"><path d="M.5 0v6M2.500 0v6M4.500 0v6M6.500 0v6" stroke="#8ba6e6" /></svg>
          </HThumb>
          <ScrollButton aria-label="Derecha"><Chevron turn={270} /></ScrollButton>
        </HScroll>
        <EndMark />
        <Corner />
      </BottomRow>

      <StatusBar>
        <Cell $pad={8}>Hoja 1 / 1</Cell>
        <Cell $pad={5}>mp1</Cell>
        <Cell />
        <Cell $pad={3}>STD</Cell>
        <Cell>*</Cell>
        <Cell />
        <Cell>Suma=0</Cell>
        <ZoomCell $pad={5}>
          <svg width="13" height="13" stroke="#2b5f8e" fill="none">
            <circle cx="6.500" cy="6.500" r="5" fill="#e3f0fa" />
            <path d="M4 6.500h5" />
          </svg>
          <ZoomRange type="range" min={0} max={100} defaultValue={34} aria-label="Escala" />
          <svg width="13" height="13" stroke="#2b5f8e" fill="none">
            <circle cx="6.500" cy="6.500" r="5" fill="#e3f0fa" />
            <path d="M4 6.500h5M6.500 4v5" />
          </svg>
        </ZoomCell>
        <Cell $pad={6}>80%</Cell>
      </StatusBar>

      <SideHandle aria-label="Mostrar panel">
        <svg width="16" height="36" fill="#6f6f6f">
          <path d="M7 1v10L1 6zM15 1v10L9 6z" />
          {[0, 1, 2, 3].map((r) => [0, 1, 2].map((c) => <rect key={`${r}${c}`} x={1 + c * 5} y={17 + r * 5} width="3" height="3" />))}
        </svg>
      </SideHandle>
    </Window>
  );
}
